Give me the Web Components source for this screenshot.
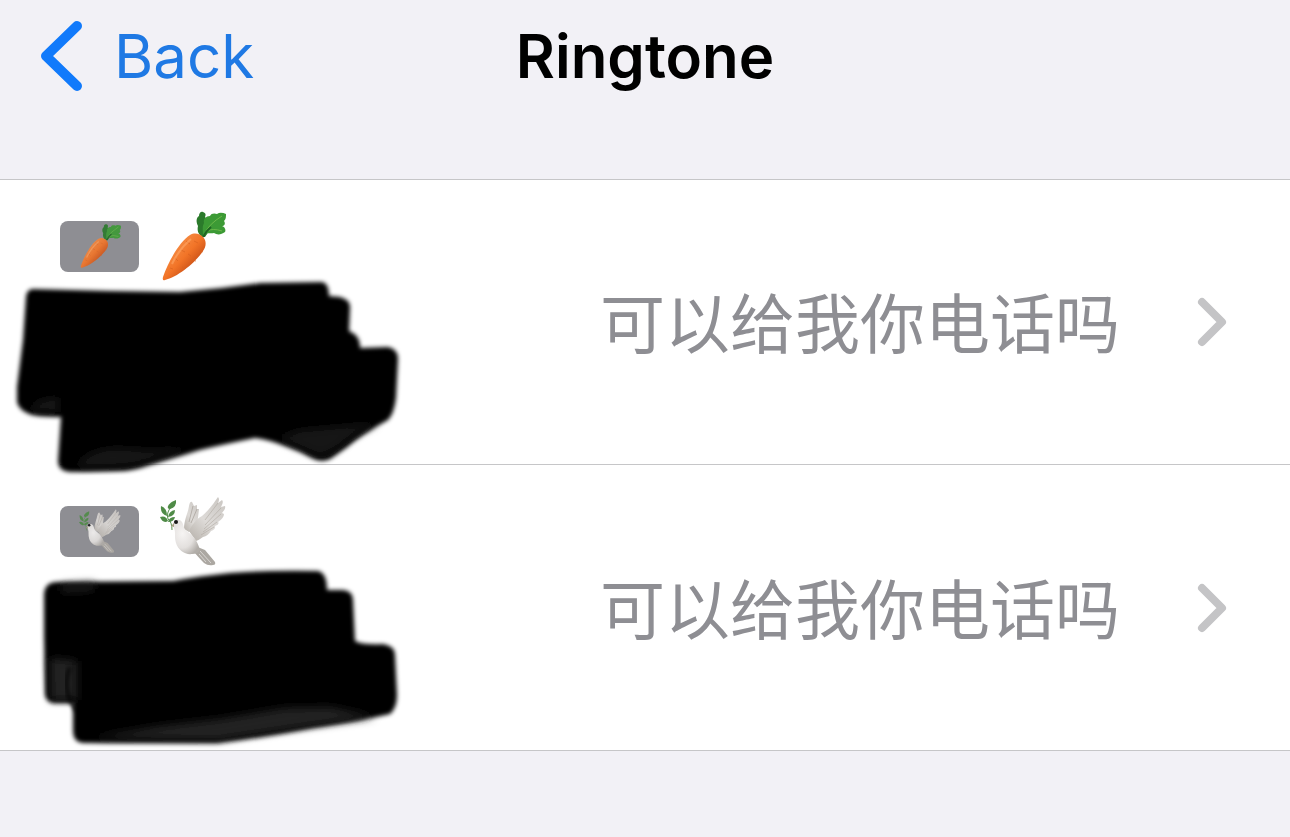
<!DOCTYPE html>
<html lang="en">
<head>
<meta charset="UTF-8">
<meta name="viewport" content="width=device-width, initial-scale=1.0">
<title>Ringtone</title>
<style>
    body {
        margin: 0;
        background: #f2f1f6;
        font-family: Inter, "Noto Sans CJK SC", sans-serif;
    }
</style>
</head>
<body>
<nav-bar>
    <span slot="back">Back</span>
    <span slot="title">Ringtone</span>
</nav-bar>
<main>
    <settings-list>
        <settings-row emoji="carrot" cover="first" label="Carrot">可以给我你电话吗</settings-row>
        <settings-row emoji="dove" cover="second" label="Dove">可以给我你电话吗</settings-row>
    </settings-list>
</main>

<script>
const EMOJI = {
    carrot: `
        <defs>
            <linearGradient id="body" x1="0.25" y1="0.3" x2="0.7" y2="0.75">
                <stop offset="0" stop-color="#f58b43"/>
                <stop offset="0.5" stop-color="#f27427"/>
                <stop offset="1" stop-color="#c94f16"/>
            </linearGradient>
        </defs>
        <path fill="#2b7a2b" d="M42 27C38 24 37 20 38 16C36 12 36 8 39 6C39 3 41 1 43 2C46 3 46 5 45 7C48 10 47 14 46 17L49 21L45 27Z"/>
        <path fill="#3c9a35" d="M43 25C43 19 42 17 44 13C43 9 46 6 50 6C51 3 55 3 57 4C60 2 63 3 66 4C66 7 66 9 64 11C66 14 64 16 62 16C65 17 66 20 65 22C61 25 57 25 54 23C50 24 47 22 46 25Z"/>
        <path fill="none" stroke="#6db84a" stroke-width="1" d="M45 23Q49 14 62 6M47 21Q53 18 62 21"/>
        <path fill="none" stroke="#1f6424" stroke-width="2" d="M43 27Q46 21 51 17"/>
        <path fill="url(#body)" d="M30 25C35 22 40 24 43 27C47 31 46 37 43 41C36 52 18 67 5 70Q2 71 3 67C8 52 20 31 30 25Z"/>
        <path fill="none" stroke="#d9621f" stroke-width="1" opacity=".7" d="M26 31l4 3M39 40l4 2M21 40l4 2M32 50l4 1M15 48l3 3M22 57l4 1M10 58l3 1M34 31l4 2M28 44l3 2"/>
        <path fill="none" stroke="#ffa766" stroke-width="2" opacity=".6" d="M31 29Q19 39 12 54"/>`,
    dove: `
        <defs>
            <linearGradient id="wing" x1="1" y1="0" x2="0.2" y2="1">
                <stop offset="0" stop-color="#c9c5c1"/>
                <stop offset="0.6" stop-color="#dedbd8"/>
                <stop offset="1" stop-color="#bdb8b2"/>
            </linearGradient>
            <radialGradient id="breast" cx="0.35" cy="0.4" r="0.7">
                <stop offset="0" stop-color="#f6f4f3"/>
                <stop offset="0.6" stop-color="#e3e0de"/>
                <stop offset="1" stop-color="#b1ada8"/>
            </radialGradient>
        </defs>
        <g transform="translate(0 2)">
            <path fill="none" stroke="#5a9450" stroke-width="1" d="M11 10Q6 16 8 22Q12 25 12 33"/>
            <g fill="#4f8b47">
                <path d="M16 3Q17 10 10 12Q7 12 8 9Q10 5 16 3Z"/>
                <path d="M1 9Q7 11 7 19Q0 17 1 9Z"/>
                <path d="M15 13Q15 19 8 20Q9 14 15 13Z"/>
                <path d="M0 20Q6 18 8 24Q3 27 0 20Z"/>
                <path d="M15 20Q14 25 8 25Q9 20 15 20Z"/>
            </g>
            <path fill="url(#wing)" d="M24 32C24 23 28 16 29 9Q30 4 32 5L34 9L37 8L37 12L39 12L37 29L29 35Z"/>
            <path fill="none" stroke="#b5afa9" stroke-width="1" d="M33 9L29 25M37 12L31 26"/>
            <path fill="url(#wing)" d="M29 34C32 28 36 22 42 19C48 14 54 6 58 0Q60 2 58 6L62 3Q64 5 61 10L65 9Q66 12 62 16L64 17Q64 21 58 25Q60 27 55 29Q56 32 51 34Q48 39 43 40Q39 43 36 44Z"/>
            <path fill="none" stroke="#b0aaa3" stroke-width="1" opacity=".6" d="M58 6L45 23M61 11L45 28M61 17L44 32M57 25L43 35M54 30L41 38"/>
            <path fill="#aca8a2" d="M35 49L45 53L55 65Q56 68 53 68Q48 69 44 66Q40 62 34 55Z"/>
            <path fill="none" stroke="#d9d6d3" stroke-width="1" d="M40 54L51 66M39 57L46 65"/>
            <path fill="url(#breast)" d="M13 27C14 23 19 21 22 25C24 28 23 32 28 35C35 40 38 46 40 53Q38 57 32 57C25 58 18 53 16 46C14 40 16 36 14 31Z"/>
            <path fill="#aaa084" d="M14 26L11 29L14 30Z"/>
            <circle cx="16" cy="25" r="2" fill="#171717"/>
        </g>`
};

// Marker strokes laid over a row, in the row's own pixels
const COVERS = {
    first: `
        <path filter="url(#soft)" d="M33 109L110 111L180 112Q220 109 260 103L322 102Q329 103 329 116L340 117Q351 120 350 128L349 151Q361 156 360 168L388 167Q398 169 398 179L396 218Q394 234 388 240Q362 254 347 267L330 279Q321 283 312 278Q300 271 288 267Q270 260 255 258Q225 264 200 270L149 285Q133 291 118 291L70 292Q58 291 58 281L61 237L40 236Q20 234 17 222V207L23 160L26 117Q27 109 33 109Z"/>
        <path fill="#191919" filter="url(#smudge)" d="M30 228Q38 219 58 217V232L32 231ZM77 285Q90 268 119 268Q160 272 195 267L145 282Q120 288 77 287ZM278 258L300 250L378 243Q350 256 342 264Q325 278 315 274Z"/>`,
    second: `
        <path filter="url(#soft)" d="M57 117L173 116Q200 111 230 108Q270 105 318 106Q327 108 327 125L343 125Q353 126 353 135L355 176Q363 180 383 179Q395 181 395 190L397 230Q397 243 390 249Q360 256 313 263Q260 273 217 278H83Q73 277 73 266V238H53Q45 236 45 228L44 172V129Q45 117 57 117Z"/>
        <path fill="#202020" filter="url(#smudge)" d="M50 193L77 196V235H51ZM62 120L94 118V125L61 127ZM90 273L160 261L220 254L285 243L330 242L375 252L310 261L217 275Z"/>
        <path fill="none" stroke="#000" stroke-width="3" filter="url(#soft)" d="M70 202Q60 224 77 246"/>`
};

class NavBar extends HTMLElement {
    constructor() {
        super();
        this.attachShadow({ mode: 'open' });
    }

    connectedCallback() {
        this.shadowRoot.innerHTML = `
            <style>
                :host {
                    display: block;
                    padding-bottom: 67px;
                }
                header {
                    display: grid;
                    grid-template-columns: 1fr auto 1fr;
                    align-items: center;
                    height: 112px;
                    padding: 0 40px;
                    font-size: 60px;
                    line-height: 76px;
                }
                button {
                    display: flex;
                    align-items: center;
                    justify-self: start;
                    gap: 32px;
                    padding: 0;
                    border: 0;
                    background: none;
                    color: #1f79e4;
                    font: inherit;
                    cursor: pointer;
                }
                h1 {
                    margin: 0;
                    color: #000;
                    font-size: inherit;
                    font-weight: 600;
                }
            </style>
            <header>
                <button type="button">
                    <svg width="42" height="72" viewBox="0 0 42 72" aria-hidden="true">
                        <path d="M37 6L6 36L37 66" fill="none" stroke="#117afb" stroke-width="10" stroke-linecap="round" stroke-linejoin="round"/>
                    </svg>
                    <slot name="back"></slot>
                </button>
                <h1><slot name="title"></slot></h1>
            </header>
        `;
    }
}

class EmojiGlyph extends HTMLElement {
    constructor() {
        super();
        this.attachShadow({ mode: 'open' });
    }

    connectedCallback() {
        this.shadowRoot.innerHTML = `
            <style>
                :host {
                    display: block;
                    width: 66px;
                    height: 72px;
                }
                :host([small]) {
                    width: 42px;
                    height: 46px;
                    opacity: 0.9;
                }
                svg {
                    display: block;
                    width: 100%;
                    height: 100%;
                }
            </style>
            <svg viewBox="0 0 66 72" aria-hidden="true">${EMOJI[this.getAttribute('name')]}</svg>
        `;
    }
}

class SettingsRow extends HTMLElement {
    constructor() {
        super();
        this.attachShadow({ mode: 'open' });
    }

    connectedCallback() {
        const emoji = this.getAttribute('emoji');
        this.shadowRoot.innerHTML = `
            <style>
                :host {
                    display: block;
                    position: relative;
                    padding-left: 60px;
                }
                :host(:first-child) {
                    z-index: 1;
                }
                a {
                    display: flex;
                    align-items: center;
                    box-sizing: border-box;
                    min-height: 285px;
                    padding-right: 63px;
                    color: #8e8e93;
                    text-decoration: none;
                }
                :host(:not(:last-child)) a {
                    border-bottom: 1px solid #c6c6c8;
                }
                .label {
                    display: flex;
                    flex: 1;
                    align-self: flex-start;
                    align-items: center;
                    gap: 21px;
                    padding-top: 30px;
                }
                .badge {
                    display: flex;
                    align-items: center;
                    justify-content: center;
                    width: 79px;
                    height: 51px;
                    border-radius: 8px;
                    background: #8e8e93;
                }
                .value {
                    margin-right: 77px;
                    padding-top: 6px;
                    font-size: 65px;
                    line-height: 96px;
                    white-space: nowrap;
                }
                .cover {
                    position: absolute;
                    top: 0;
                    left: 0;
                    overflow: visible;
                    pointer-events: none;
                }
            </style>
            <a href="#${emoji}" aria-label="${this.getAttribute('label')}">
                <span class="label">
                    <span class="badge"><emoji-glyph small name="${emoji}"></emoji-glyph></span>
                    <emoji-glyph name="${emoji}"></emoji-glyph>
                </span>
                <span class="value"><slot></slot></span>
                <svg width="30" height="50" viewBox="0 0 30 50" aria-hidden="true">
                    <path d="M5 5L25 25L5 45" fill="none" stroke="#c4c4c6" stroke-width="8" stroke-linecap="round" stroke-linejoin="round"/>
                </svg>
            </a>
            <svg class="cover" width="400" height="284" viewBox="0 0 400 284" aria-hidden="true">
                <defs>
                    <filter id="soft"><feGaussianBlur stdDeviation="2"/></filter>
                    <filter id="smudge"><feGaussianBlur stdDeviation="4"/></filter>
                </defs>
                ${COVERS[this.getAttribute('cover')]}
            </svg>
        `;
    }
}

class SettingsList extends HTMLElement {
    constructor() {
        super();
        this.attachShadow({ mode: 'open' });
    }

    connectedCallback() {
        this.shadowRoot.innerHTML = `
            <style>
                :host {
                    display: block;
                    border-top: 1px solid #c6c6c8;
                    border-bottom: 1px solid #c6c6c8;
                    background: #fff;
                }
            </style>
            <slot></slot>
        `;
    }
}

customElements.define('nav-bar', NavBar);
customElements.define('emoji-glyph', EmojiGlyph);
customElements.define('settings-row', SettingsRow);
customElements.define('settings-list', SettingsList);
</script>
</body>
</html>
